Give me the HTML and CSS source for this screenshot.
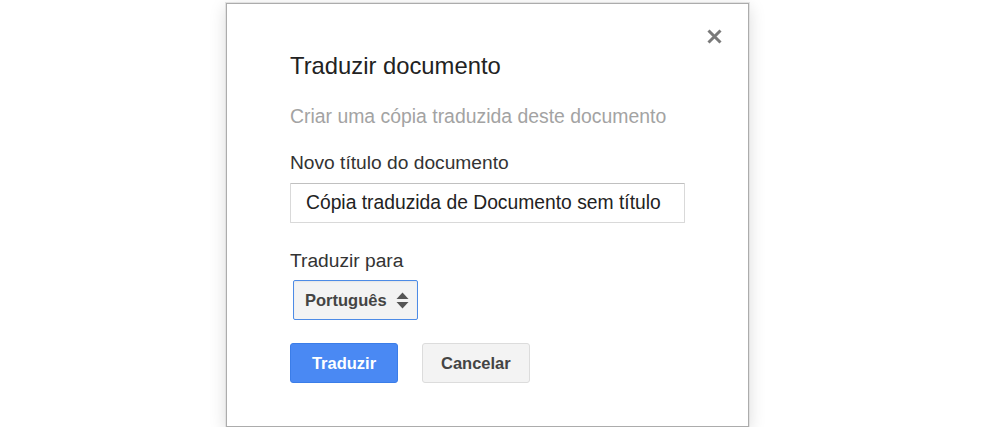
FILE: index.html
```html
<!DOCTYPE html>
<html lang="pt">
<head>
    <meta charset="UTF-8">
    <meta name="viewport" content="width=device-width, initial-scale=1.0">
    <title>Traduzir documento</title>
    <link rel="stylesheet" href="styles.css">
</head>
<body>
    <div class="dialog">
        <button class="close" aria-label="Fechar">
            <svg width="15" height="15" viewBox="0 0 15 15">
                <path d="M1.5 1.5 L13.5 13.5 M13.5 1.5 L1.5 13.5" stroke="#7a7a7a" stroke-width="3" fill="none"/>
            </svg>
        </button>
        <h1 class="title">Traduzir documento</h1>
        <p class="subtitle">Criar uma cópia traduzida deste documento</p>

        <label class="label" for="doc-title">Novo título do documento</label>
        <input class="text-input" id="doc-title" type="text" value="Cópia traduzida de Documento sem título">

        <label class="label label-lang">Traduzir para</label>
        <div class="select">
            <span>Português</span>
            <svg class="arrows" width="13" height="17" viewBox="0 0 13 17">
                <path d="M6.5 0.5 L12.5 7 L0.5 7 Z" fill="#555"/>
                <path d="M0.5 10 L12.5 10 L6.5 16.5 Z" fill="#555"/>
            </svg>
        </div>

        <div class="buttons">
            <button class="btn btn-primary">Traduzir</button>
            <button class="btn">Cancelar</button>
        </div>
    </div>
</body>
</html>
```

FILE: styles.css
```css
body {
    font-family: 'Liberation Sans', Arial, sans-serif;
    color: #222;
    background-color: #fff;
    margin: 0;
}
.dialog {
    position: relative;
    box-sizing: border-box;
    width: 523px;
    height: 424px;
    margin: 3px 0 0 226px;
    padding: 48px 63px 0 63px;
    background-color: #fff;
    border: 1px solid #acacac;
    box-shadow: 0 0 0 1px #e2e2e2, 0 4px 16px rgba(0,0,0,0.15);
}
.close {
    position: absolute;
    top: 25px;
    right: 26px;
    padding: 0;
    border: none;
    background: none;
    width: 15px;
    height: 15px;
    cursor: pointer;
}
.close svg {
    display: block;
}
.title {
    margin: 0;
    font-size: 23.8px;
    line-height: 28px;
    font-weight: normal;
    color: #222;
}
.subtitle {
    margin: 24px 0 0;
    font-size: 19.4px;
    line-height: 24px;
    color: #a3a3a3;
}
.label {
    display: block;
    margin-top: 23px;
    font-size: 19.2px;
    line-height: 24px;
    color: #333;
}
.label-lang {
    margin-top: 26px;
}
.text-input {
    display: block;
    box-sizing: border-box;
    width: 395px;
    height: 40px;
    margin: 8px 0 0;
    padding: 0 0 0 15px;
    font-family: inherit;
    font-size: 19.3px;
    color: #222;
    border: 1px solid #d9d9d9;
    border-top-color: #c0c0c0;
    border-radius: 1px;
    outline: none;
}
.select {
    display: flex;
    align-items: center;
    justify-content: space-between;
    box-sizing: border-box;
    width: 125px;
    height: 40px;
    margin: 7px 0 0 3px;
    padding: 0 8px 0 11px;
    font-size: 16.5px;
    font-weight: bold;
    color: #444;
    background-color: #f3f3f3;
    border: 1px solid #4d8be6;
    border-radius: 2px;
    box-shadow: inset 0 1px 2px rgba(0,0,0,0.06);
}
.arrows {
    display: block;
}
.buttons {
    display: flex;
    gap: 24px;
    margin-top: 23px;
}
.btn {
    box-sizing: border-box;
    height: 40px;
    min-width: 106px;
    padding: 0 18px;
    font-family: inherit;
    font-size: 16.5px;
    font-weight: bold;
    color: #444;
    background-color: #f3f3f3;
    border: 1px solid #dcdcdc;
    border-radius: 3px;
    cursor: pointer;
}
.btn-primary {
    min-width: 108px;
    color: #fff;
    background-color: #4a89f3;
    border-color: #3b7de8;
}
```
